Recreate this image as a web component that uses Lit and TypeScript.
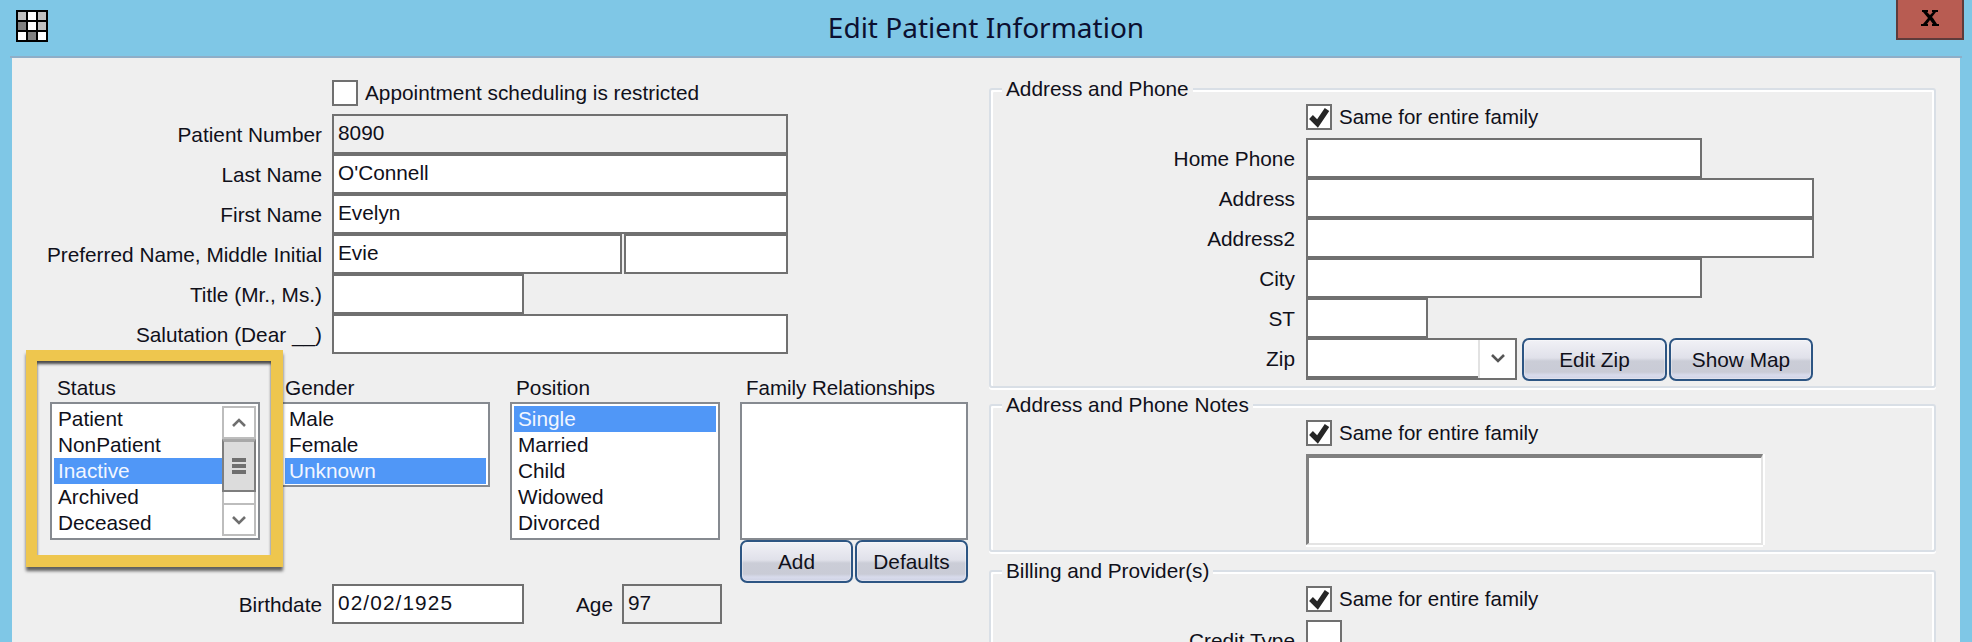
import { LitElement, html, css, svg } from "lit";
import { customElement } from "lit/decorators.js";

const check = html`<svg class="tick" viewBox="0 0 22 22" width="22" height="22"><polyline points="3,11 9.5,17.5 19,3.5" fill="none" stroke="#262626" stroke-width="5.4"/></svg>`;

const chevron = (down: boolean, color = "#6f6f6f") =>
  html`<svg viewBox="0 0 14 10" width="14" height="10"><polyline points=${down ? "1,2 7,8 13,2" : "1,8 7,2 13,8"} fill="none" stroke=${color} stroke-width="2.6"/></svg>`;

const gridCells: [number, number, string][] = [
  [0, 0, "#c0c0c0"], [1, 0, "#fff"], [2, 0, "#c0c0c0"],
  [0, 1, "#808080"], [1, 1, "#fff"], [2, 1, "#c0c0c0"],
  [0, 2, "#fff"], [1, 2, "#808080"], [2, 2, "#fff"],
];

@customElement("app-root")
export class AppRoot extends LitElement {
  static styles = css`
    :host {
      display: block;
      width: 1972px;
      height: 642px;
      overflow: hidden;
      background: #7fc7e6;
      font-family: "Liberation Sans", Arial, sans-serif;
      font-size: 20.8px;
      color: #10101a;
    }
    * { box-sizing: border-box; }

    .titlebar {
      height: 56px;
      display: grid;
      grid-template-columns: 1fr auto 1fr;
      align-items: start;
    }
    .app-icon { margin: 10px 0 0 16px; display: block; }
    .title {
      font-family: "Noto Sans", sans-serif;
      font-size: 28px;
      line-height: 54px;
      color: #0c1030;
    }
    .close {
      justify-self: end;
      margin-right: 8px;
      width: 68px;
      height: 40px;
      background: #b85c52;
      border: 2px solid #5e3b3b;
      border-top: 0;
      display: flex;
      align-items: flex-start;
      justify-content: center;
      padding-top: 10px;
    }
    .rule { height: 2px; margin: 0 10px; background: #8eaec8; }
    .panel {
      margin: 0 12px;
      height: 584px;
      background: #efefef;
      display: flex;
      align-items: flex-start;
    }

    .left { width: 977px; padding-top: 22px; display: flex; flex-direction: column; }
    .right { width: 947px; padding-top: 30px; display: flex; flex-direction: column; }

    .row { display: flex; align-items: stretch; height: 40px; }
    .row.chk { height: 26px; margin-bottom: 8px; }
    .lab {
      width: 310px;
      margin-right: 10px;
      text-align: right;
      line-height: 42px;
      white-space: nowrap;
    }
    .field {
      border: 2px solid #707070;
      background: #fff;
      padding-left: 4px;
      line-height: 34px;
      white-space: nowrap;
      overflow: hidden;
      height: 40px;
    }
    .field.ro { background: #efefef; }
    .date { letter-spacing: 1.1px; }
    .w456 { width: 456px; }
    .w290 { width: 290px; }
    .w164 { width: 164px; margin-left: 2px; }
    .w192 { width: 192px; }
    .w100 { width: 100px; }

    .chk-wrap { display: flex; align-items: center; gap: 7px; white-space: nowrap; }
    .same { font-size: 20.5px; }
    .offset { margin-left: 320px; }
    .box {
      width: 26px;
      height: 26px;
      border: 2px solid #707070;
      background: #fff;
      display: block;
    }
    .tick { display: block; }

    .lists { display: flex; align-items: flex-start; margin-top: -4px; height: 233px; margin-bottom: 1px; }
    .col { padding-top: 25px; }
    .cap { line-height: 26px; height: 26px; margin-bottom: 1px; white-space: nowrap; }
    .highlight {
      position: relative;
      z-index: 1;
      margin-left: 14px;
      width: 257px;
      height: 217px;
      background: #efefef;
      border: solid #eec64e;
      border-width: 11px 12px 12px 11px;
      padding: 14px 0 0 13px;
      box-shadow: 0 4px 3px rgba(0, 0, 0, 0.6), inset 0 3px 3px rgba(0, 0, 0, 0.7);
    }
    .highlight .cap { padding-left: 7px; }
    .gender { margin-left: -2px; width: 209px; }
    .gender .cap { padding-left: 4px; }
    .position { margin-left: 20px; width: 210px; }
    .position .cap { padding-left: 6px; }
    .family { margin-left: 20px; width: 228px; }
    .family .cap { padding-left: 6px; font-size: 20.5px; }

    .list {
      border: 2px solid #868a90;
      background: #fff;
      padding: 2px;
      height: 138px;
      width: 210px;
      display: flex;
    }
    .gender .list { width: 209px; height: 85px; }
    .family .list { width: 228px; }
    .items { flex: 1; min-width: 0; }
    .item { height: 26px; line-height: 25px; padding-left: 4px; white-space: nowrap; }
    .item.sel { background: #5097f7; color: #f2f6ff; }

    .sb { width: 34px; display: flex; flex-direction: column; }
    .sb-btn {
      height: 33px;
      border: 2px solid #bdbdbd;
      background: #fff;
      display: flex;
      align-items: center;
      justify-content: center;
    }
    .sb-thumb {
      height: 53px;
      background: #dcdcdc;
      border: 2px solid #7e7e7e;
      border-top: 3px solid #a8a8a8;
      display: flex;
      flex-direction: column;
      align-items: center;
      justify-content: center;
      gap: 2px;
    }
    .grip { width: 14px; height: 4px; background: #6f6f6f; }
    .sb-track { height: 11px; background: #fff; border-left: 2px solid #bdbdbd; border-right: 2px solid #bdbdbd; }

    .btn {
      border: 2px solid #2d5583;
      border-radius: 7px;
      height: 43px;
      display: flex;
      align-items: center;
      justify-content: center;
      white-space: nowrap;
      background: linear-gradient(#f1f1f6 0%, #e0e1ea 46%, #cbcdd7 54%, #c9cbd6 82%, #d8dbec 90%, #cfd2e4 100%);
      box-shadow: inset 0 0 0 1px rgba(255, 255, 255, 0.35);
      color: #10101a;
    }
    .btns { display: flex; gap: 2px; }
    .btn-113 { width: 113px; }
    .btn-145 { width: 145px; }
    .btn-144 { width: 144px; }

    .age-lab { width: 40px; margin-left: 49px; margin-right: 9px; text-align: right; line-height: 42px; }

    .group {
      border: 2px solid #d9dfe6;
      border-radius: 3px;
      box-shadow: inset 2px 2px 0 #fff, inset -2px 0 0 #fff, 0 2px 0 #fff;
      display: flex;
      flex-direction: column;
    }
    .legend {
      align-self: flex-start;
      margin: -14px 0 2px 11px;
      padding: 0 4px;
      height: 26px;
      line-height: 26px;
      background: #efefef;
      white-space: nowrap;
    }
    .g1 { height: 300px; }
    .g2 { height: 148px; margin-top: 16px; }
    .g3 { height: 200px; margin-top: 18px; }
    .rlab { width: 304px; margin-right: 11px; text-align: right; line-height: 42px; white-space: nowrap; }
    .rcheck { margin-left: 315px; }
    .w396 { width: 396px; }
    .w508 { width: 508px; }
    .w122 { width: 122px; }
    .w36 { width: 36px; }

    .combo {
      width: 211px;
      height: 42px;
      border: 2px solid #707070;
      background: #fff;
      display: flex;
    }
    .combo-text { flex: 1; border-bottom: 2px solid #707070; }
    .combo-arrow {
      width: 37px;
      border-left: 2px solid #e2e2e2;
      display: flex;
      align-items: center;
      justify-content: center;
      padding-bottom: 2px;
    }
    .zip { height: 42px; }
    .zip .btns { margin-left: 5px; }
    .notes {
      margin-left: 315px;
      width: 457px;
      height: 91px;
      background: #fff;
      border-top: 4px solid #808080;
      border-left: 3px solid #808080;
      border-right: 2px solid #e4e4e4;
      border-bottom: 2px solid #e4e4e4;
      box-shadow: 0 2px 0 #fff, 2px 0 0 #fff;
    }
  `;

  private labeled(label: string, value: string, cls: string, ro = false) {
    return html`<div class="row">
      <div class="lab">${label}</div>
      <div class="field ${cls} ${ro ? "ro" : ""}">${value}</div>
    </div>`;
  }

  private addr(label: string, cls: string) {
    return html`<div class="row">
      <div class="rlab">${label}</div>
      <div class="field ${cls}"></div>
    </div>`;
  }

  private same() {
    return html`<div class="row chk rcheck">
      <div class="chk-wrap same"><span class="box">${check}</span><span>Same for entire family</span></div>
    </div>`;
  }

  private items(list: string[], selected: number) {
    return html`<div class="items">
      ${list.map((t, i) => html`<div class="item ${i === selected ? "sel" : ""}">${t}</div>`)}
    </div>`;
  }

  render() {
    return html`
      <div class="titlebar">
        <svg class="app-icon" width="32" height="32" viewBox="0 0 32 32">
          <rect width="32" height="32" fill="#000"/>
          ${gridCells.map(([c, r, f]) => svg`<rect x=${2 + c * 10} y=${2 + r * 10} width="8" height="8" fill=${f}/>`)}
        </svg>
        <div class="title">Edit Patient Information</div>
        <div class="close">
          <svg width="18" height="16" viewBox="0 0 18 16">
            <path d="M1 0h6v2H6l3 3 3-3h-1V0h6v2h-2l-4 5 1 1 4 6h2v2h-7v-2h1l-3-4-3 4h1v2H0v-2h2l5-6-5-6H1z" fill="#000"/>
          </svg>
        </div>
      </div>
      <div class="rule"></div>
      <div class="panel">
        <div class="left">
          <div class="row chk offset">
            <div class="chk-wrap"><span class="box"></span><span>Appointment scheduling is restricted</span></div>
          </div>
          ${this.labeled("Patient Number", "8090", "w456", true)}
          ${this.labeled("Last Name", "O'Connell", "w456")}
          ${this.labeled("First Name", "Evelyn", "w456")}
          <div class="row">
            <div class="lab">Preferred Name, Middle Initial</div>
            <div class="field w290">Evie</div>
            <div class="field w164"></div>
          </div>
          ${this.labeled("Title (Mr., Ms.)", "", "w192")}
          ${this.labeled("Salutation (Dear __)", "", "w456")}

          <div class="lists">
            <div class="highlight">
              <div class="cap">Status</div>
              <div class="list">
                ${this.items(["Patient", "NonPatient", "Inactive", "Archived", "Deceased"], 2)}
                <div class="sb">
                  <div class="sb-btn">${chevron(false)}</div>
                  <div class="sb-thumb"><div class="grip"></div><div class="grip"></div><div class="grip"></div></div>
                  <div class="sb-track"></div>
                  <div class="sb-btn">${chevron(true)}</div>
                </div>
              </div>
            </div>
            <div class="col gender">
              <div class="cap">Gender</div>
              <div class="list">${this.items(["Male", "Female", "Unknown"], 2)}</div>
            </div>
            <div class="col position">
              <div class="cap">Position</div>
              <div class="list">${this.items(["Single", "Married", "Child", "Widowed", "Divorced"], 0)}</div>
            </div>
            <div class="col family">
              <div class="cap">Family Relationships</div>
              <div class="list"></div>
              <div class="btns">
                <div class="btn btn-113">Add</div>
                <div class="btn btn-113">Defaults</div>
              </div>
            </div>
          </div>

          <div class="row">
            <div class="lab">Birthdate</div>
            <div class="field w192 date">02/02/1925</div>
            <div class="age-lab">Age</div>
            <div class="field ro w100">97</div>
          </div>
        </div>

        <div class="right">
          <div class="group g1">
            <div class="legend">Address and Phone</div>
            ${this.same()}
            ${this.addr("Home Phone", "w396")}
            ${this.addr("Address", "w508")}
            ${this.addr("Address2", "w508")}
            ${this.addr("City", "w396")}
            ${this.addr("ST", "w122")}
            <div class="row zip">
              <div class="rlab">Zip</div>
              <div class="combo">
                <div class="combo-text"></div>
                <div class="combo-arrow">${chevron(true, "#555")}</div>
              </div>
              <div class="btns">
                <div class="btn btn-145">Edit Zip</div>
                <div class="btn btn-144">Show Map</div>
              </div>
            </div>
          </div>
          <div class="group g2">
            <div class="legend">Address and Phone Notes</div>
            ${this.same()}
            <div class="notes"></div>
          </div>
          <div class="group g3">
            <div class="legend">Billing and Provider(s)</div>
            ${this.same()}
            ${this.addr("Credit Type", "w36")}
          </div>
        </div>
      </div>
    `;
  }
}
